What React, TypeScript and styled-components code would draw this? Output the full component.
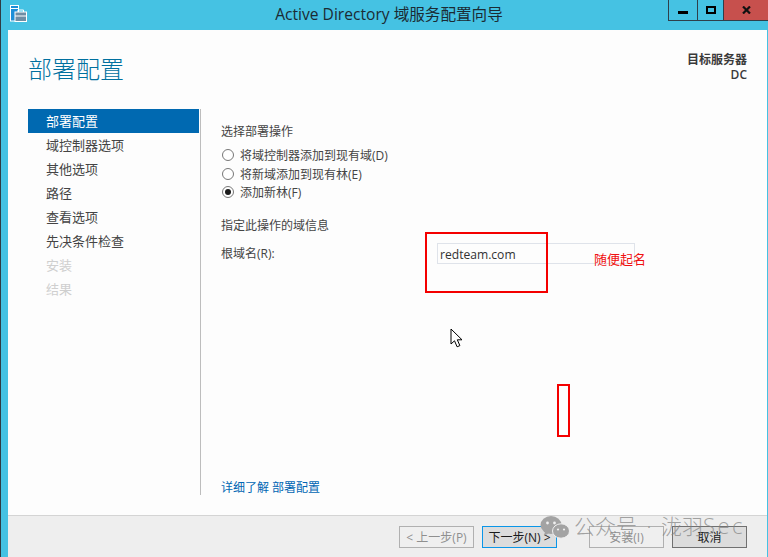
import React from "react";
import styled, { createGlobalStyle } from "styled-components";

const FONT = `"Open Sans", "Noto Sans", "Noto Sans CJK SC", sans-serif`;

const Global = createGlobalStyle`
  html, body { margin: 0; padding: 0; background: #45c2e3; }
  * { box-sizing: border-box; }
  body { font-family: ${FONT}; overflow: hidden; }
`;

const Screen = styled.div`
  position: relative;
  width: 768px;
  height: 557px;
  display: flex;
  flex-direction: column;
  background: #45c2e3;
  border-left: 1px solid #2f3b44;
  overflow: hidden;
`;

const TitleBar = styled.header`
  height: 30px;
  flex: none;
  display: grid;
  grid-template-columns: 1fr auto 1fr;
  align-items: start;
  padding-left: 9px;
`;

const AppIcon = styled.svg`
  width: 17px;
  height: 17px;
  margin-top: 5px;
`;

const Title = styled.div`
  font-size: 15.6px;
  line-height: 29px;
  color: #1b2b33;
  white-space: nowrap;
`;

const Controls = styled.div`
  justify-self: end;
  display: flex;
  height: 21px;
`;

const Control = styled.div<{ $w: number; $close?: boolean }>`
  width: ${(p) => p.$w}px;
  height: 21px;
  display: flex;
  align-items: flex-start;
  justify-content: center;
  padding-top: 6px;
  background: ${(p) => (p.$close ? "#c7504d" : "transparent")};
  border-left: 1px solid #2f3f4a;
  border-bottom: 1px solid #2f3f4a;
`;

const Client = styled.div`
  flex: 1;
  margin-left: 7px;
  margin-right: 1px;
  display: flex;
  flex-direction: column;
  background: #fdfdfd;
  min-height: 0;
`;

const Head = styled.div`
  height: 79px;
  flex: none;
  display: flex;
  justify-content: space-between;
  padding: 22px 20px 0 20px;
`;

const PageTitle = styled.h1`
  margin: 0;
  font-size: 24px;
  line-height: 34px;
  font-weight: 300;
  color: #00709f;
  font-family: ${FONT};
`;

const Target = styled.div`
  text-align: right;
  font-size: 12px;
  line-height: 15px;
  font-weight: 600;
  color: #3a3a3a;
`;

const Main = styled.div`
  flex: 1;
  min-height: 0;
  display: flex;
  padding-left: 20px;
`;

const Nav = styled.nav`
  width: 173px;
  flex: none;
  height: 386px;
  border-right: 1px solid #bdbdbd;
`;

const NavItem = styled.div<{ $active?: boolean; $off?: boolean }>`
  height: 24px;
  line-height: 24px;
  margin-right: 1px;
  padding-left: 18px;
  font-size: 13px;
  background: ${(p) => (p.$active ? "#0069b1" : "transparent")};
  color: ${(p) => (p.$active ? "#fff" : p.$off ? "#cfcfcf" : "#444")};
`;

const Content = styled.div`
  flex: 1;
  padding: 14px 0 0 20px;
  display: flex;
  flex-direction: column;
  height: 387px;
  font-size: 12px;
  color: #444;
`;

const Label = styled.div`
  line-height: 17px;
`;

const RadioList = styled.div`
  display: flex;
  flex-direction: column;
  margin-top: 6px;
`;

const RadioRow = styled.div`
  height: 18.6px;
  display: flex;
  align-items: center;
  gap: 6px;
`;

const Radio = styled.span<{ $on?: boolean }>`
  width: 12px;
  height: 12px;
  margin-left: 1px;
  border-radius: 50%;
  border: 1px solid #777;
  background: #fff;
  display: flex;
  align-items: center;
  justify-content: center;
  &::after {
    content: "";
    width: 6px;
    height: 6px;
    border-radius: 50%;
    background: ${(p) => (p.$on ? "#1a1a1a" : "transparent")};
  }
`;

const InfoHead = styled(Label)`
  margin-top: 15px;
`;

const FieldRow = styled.div`
  margin-top: 9px;
  display: flex;
  align-items: center;
  height: 21px;
`;

const FieldLabel = styled.label`
  width: 216px;
  flex: none;
`;

const DomainInput = styled.div`
  width: 198px;
  height: 21px;
  border: 1px solid #dfe3ea;
  padding-left: 2px;
  line-height: 21px;
  font-size: 12.1px;
  color: #333;
`;

const LearnMore = styled.a`
  margin-top: auto;
  color: #0066b3;
  font-size: 12px;
  line-height: 17px;
`;

const Footer = styled.footer`
  height: 42px;
  flex: none;
  margin-top: auto;
  background: #eeeeee;
  border-top: 1px solid #d4d4d4;
  display: flex;
  align-items: flex-start;
  padding: 10px 20px 0 0;
  justify-content: flex-end;
`;

const Btn = styled.div<{ $focus?: boolean; $off?: boolean; $ml?: number }>`
  width: 75px;
  height: 22px;
  margin-left: ${(p) => p.$ml ?? 8}px;
  display: flex;
  align-items: center;
  justify-content: center;
  font-size: 12px;
  color: ${(p) => (p.$off ? "#8f8f8f" : "#1a1a1a")};
  background: ${(p) => (p.$off ? "#efefef" : "#dcdcdc")};
  border: 1px solid ${(p) => (p.$focus ? "#0a96e8" : p.$off ? "#b0b0b0" : "#707070")};
`;

const RedBox = styled.div<{ $x: number; $y: number; $w: number; $h: number }>`
  position: absolute;
  left: ${(p) => p.$x}px;
  top: ${(p) => p.$y}px;
  width: ${(p) => p.$w}px;
  height: ${(p) => p.$h}px;
  border: 2px solid #f40000;
`;

const RedNote = styled.div`
  position: absolute;
  left: 593px;
  top: 251px;
  font-size: 13px;
  line-height: 17px;
  color: #f01010;
`;

const Cursor = styled.svg`
  position: absolute;
  left: 449px;
  top: 328px;
  width: 14px;
  height: 22px;
`;

const Watermark = styled.div`
  position: absolute;
  left: 539px;
  top: 511px;
  display: flex;
  align-items: center;
  gap: 4px;
  color: rgba(130, 130, 130, 0.72);
  font-size: 21px;
  font-weight: 300;
  line-height: 28px;
  white-space: nowrap;
  word-spacing: 4px;
`;

const WatermarkIcon = styled.svg`
  margin-top: 4px;
`;

const WatermarkLatin = styled.span`
  font-size: 22px;
  letter-spacing: 2.5px;
`;

const nav = ["部署配置", "域控制器选项", "其他选项", "路径", "查看选项", "先决条件检查", "安装", "结果"];

export default function App() {
  return (
    <Screen>
      <Global />
      <TitleBar>
        <AppIcon viewBox="0 0 17 17">
          <rect x="0.5" y="0.5" width="8" height="15.5" fill="#1c8fd8" stroke="#fff" />
          <rect x="1" y="3" width="7" height="1" fill="#fff" />
          <rect x="5" y="7" width="11.5" height="9.5" fill="#6f8ea4" stroke="#fff" />
          <path d="M8 7V5h5.5v2M5 11h11.5" fill="none" stroke="#fff" />
        </AppIcon>
        <Title>Active Directory 域服务配置向导</Title>
        <Controls>
          <Control $w={29}>
            <svg width="10" height="8" viewBox="0 0 10 8"><rect y="5" width="10" height="3" fill="#000" /></svg>
          </Control>
          <Control $w={26}>
            <svg width="10" height="8" viewBox="0 0 10 8"><rect x="1" y="1" width="8" height="6" fill="none" stroke="#000" strokeWidth="2" /></svg>
          </Control>
          <Control $w={45} $close>
            <svg width="9" height="8" viewBox="0 0 9 8"><path d="M1 0.5l7 7M8 0.5l-7 7" stroke="#111" strokeWidth="2.2" /></svg>
          </Control>
        </Controls>
      </TitleBar>
      <Client>
        <Head>
          <PageTitle>部署配置</PageTitle>
          <Target>
            目标服务器
            <br />
            DC
          </Target>
        </Head>
        <Main>
          <Nav>
            {nav.map((t, i) => (
              <NavItem key={t} $active={i === 0} $off={i > 5}>
                {t}
              </NavItem>
            ))}
          </Nav>
          <Content>
            <Label>选择部署操作</Label>
            <RadioList>
              <RadioRow><Radio />将域控制器添加到现有域(D)</RadioRow>
              <RadioRow><Radio />将新域添加到现有林(E)</RadioRow>
              <RadioRow><Radio $on />添加新林(F)</RadioRow>
            </RadioList>
            <InfoHead>指定此操作的域信息</InfoHead>
            <FieldRow>
              <FieldLabel>根域名(R):</FieldLabel>
              <DomainInput>redteam.com</DomainInput>
            </FieldRow>
            <LearnMore>详细了解 部署配置</LearnMore>
          </Content>
        </Main>
        <Footer>
          <Btn $off>&lt; 上一步(P)</Btn>
          <Btn $focus>下一步(N) &gt;</Btn>
          <Btn $off $ml={32}>安装(I)</Btn>
          <Btn>取消</Btn>
        </Footer>
      </Client>

      <RedBox $x={424} $y={232} $w={123} $h={61} />
      <RedBox $x={556} $y={384} $w={13} $h={53} />
      <RedNote>随便起名</RedNote>
      <Cursor viewBox="0 0 14 22">
        <path d="M1 1v15l3.5-3.2 2.6 6 2.8-1.2-2.6-5.8H12z" fill="#fff" stroke="#000" strokeWidth="1" />
      </Cursor>
      <Watermark>
        <WatermarkIcon width="30" height="25" viewBox="0 0 30 25">
          <ellipse cx="11" cy="10" rx="10.5" ry="9" fill="#a3a3a3" />
          <path d="M5 16l-1 5 5-3z" fill="#a3a3a3" />
          <ellipse cx="21" cy="16" rx="8.5" ry="7.2" fill="#a3a3a3" stroke="#efefef" strokeWidth="1" />
          <circle cx="7.5" cy="8" r="1.4" fill="#efefef" />
          <circle cx="14.5" cy="8" r="1.4" fill="#efefef" />
          <circle cx="18" cy="14.5" r="1.1" fill="#efefef" />
          <circle cx="24" cy="14.5" r="1.1" fill="#efefef" />
        </WatermarkIcon>
        <span>公众号 · 泷羽<WatermarkLatin>Sec</WatermarkLatin></span>
      </Watermark>
    </Screen>
  );
}
